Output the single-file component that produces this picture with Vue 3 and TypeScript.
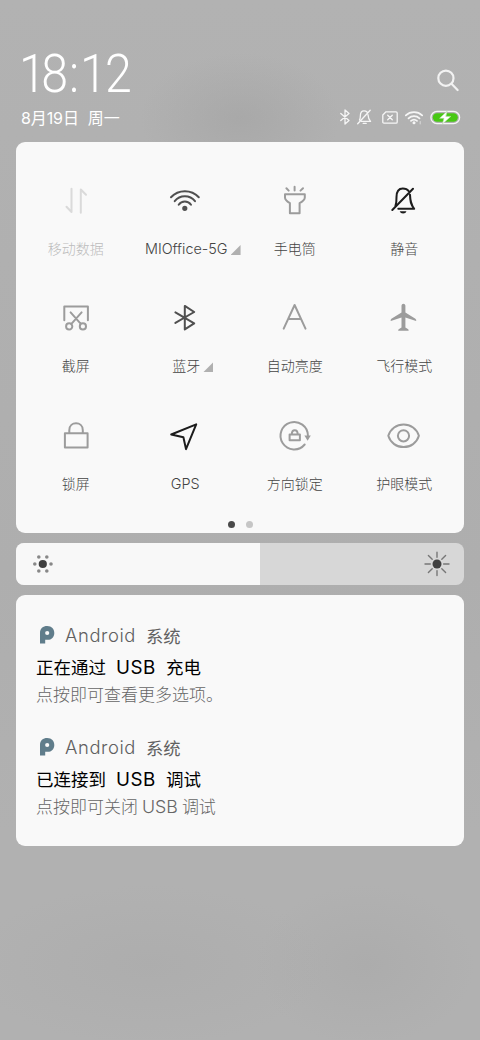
<script setup lang="ts">
interface Shape { d: string; solid?: boolean }
interface Tile { label: string; tone: string; more?: boolean; latin?: boolean; shapes: Shape[] }
interface Part { text: string; latin?: boolean }
interface Notice { title: Part[]; detail: Part[] }

const circle = (x: number, y: number, r: number): string =>
  `M${x - r} ${y}a${r} ${r} 0 1 0 ${2 * r} 0a${r} ${r} 0 1 0 ${-2 * r} 0z`

const tiles: Tile[] = [
  { label: '移动数据', tone: 'off', shapes: [{ d: 'M13.5 5.7V29L8.5 23.7M22.8 29.7V6.5L28 11.7' }] },
  {
    label: 'MIOffice-5G', tone: 'on', more: true, latin: true,
    shapes: [
      { d: 'M4 14.3A18.9 18.9 0 0 1 31.8 14.3M7.7 18.2A12.9 12.9 0 0 1 28 18.2M11.7 21.7A7.5 7.5 0 0 1 24 21.7' },
      { d: circle(17.8, 25.3, 2.6), solid: true },
    ],
  },
  { label: '手电筒', tone: 'idle', shapes: [{ d: 'M8 11.2H27.8V14.4Q27.8 17.2 22.6 20.2V30.2H12.9V20.2Q8 17.2 8 14.4ZM17.6 3.7V7.4M9.4 5.2L11.7 7.6M26 5.2L23.5 7.6' }] },
  {
    label: '静音', tone: 'strong',
    shapes: [
      { d: 'M6.3 27L27 5.8M9.4 23.2Q10.6 20 10.5 14C10.5 8.5 12.7 5.4 16.8 5.4Q20.8 5.4 22.8 8.3M24 11.8C24.2 18.5 24.8 21.4 28.2 25.8H12.3' },
      { d: 'M13.7 28.2H20.5Q19.8 30.4 17.1 30.4T13.7 28.2Z', solid: true },
    ],
  },
  { label: '截屏', tone: 'idle', shapes: [{ d: `M6.3 20.2V6.4H29.9V20.2M12.6 12.4L22.8 23.8M23.6 12.4L13.4 23.8${circle(11.2, 26.4, 3.1)}${circle(24.9, 26.4, 3.1)}` }] },
  { label: '蓝牙', tone: 'on', more: true, shapes: [{ d: 'M8.4 12.4L27.2 23.4L17.8 29.4V5.9L27.2 12L8.4 22.9' }] },
  { label: '自动亮度', tone: 'idle', shapes: [{ d: 'M6.7 28.6L17.6 5L28.5 28.6M11.2 19H24' }] },
  { label: '飞行模式', tone: 'idle', shapes: [{ d: 'M15.5 5.6Q15.7 3.7 17.4 3.7T19.4 5.6V12.4L29.4 18.8Q30.8 20 30.1 21L19.4 17.6V27.6L22.2 29.3Q22.8 30 22.6 30.8H12.2Q12 30 12.7 29.3L15.5 27.6V17.6L4.8 21Q4.1 20 5.4 18.8L15.5 12.4Z', solid: true }] },
  { label: '锁屏', tone: 'idle', shapes: [{ d: 'M6.9 15.2H29.6V29.5H6.9ZM11.3 15V12.3C11.3 3 24.8 3 24.8 12.3V15' }] },
  { label: 'GPS', tone: 'strong', latin: true, shapes: [{ d: 'M4.2 16.5L29.2 6.4L19 31.1L16.4 19.2Z' }] },
  {
    label: '方向锁定', tone: 'idle',
    shapes: [
      { d: 'M27.7 26.5A13.7 13.7 0 1 1 30.9 17.6M12.6 16.6H22.9V22.2H12.6ZM14.8 16.4C14.8 10.8 20.7 10.8 20.7 16.4' },
      { d: 'M27.4 17.6H33.8L30.6 22.8Z', solid: true },
    ],
  },
  { label: '护眼模式', tone: 'idle', shapes: [{ d: `M2.3 17.8C4.5 10.8 10.6 6.4 17.6 6.4S30.8 10.8 32.9 17.8C30.8 24.8 24.6 29.1 17.6 29.1S4.5 24.8 2.3 17.8Z${circle(17.5, 17.8, 5.6)}` }] },
]

const notices: Notice[] = [
  {
    title: [{ text: '正在通过' }, { text: 'USB', latin: true }, { text: '充电' }],
    detail: [{ text: '点按即可查看更多选项。' }],
  },
  {
    title: [{ text: '已连接到' }, { text: 'USB', latin: true }, { text: '调试' }],
    detail: [{ text: '点按即可关闭' }, { text: 'USB', latin: true }, { text: '调试' }],
  },
]

const brightness = 54.46
</script>

<template>
  <main class="shade">
    <header class="header">
      <div>
        <div class="clock"><span class="lead">1</span><span class="mid">8:</span><span class="tail">12</span></div>
        <div class="date">8月19日<span class="weekday">周一</span></div>
      </div>
      <div class="tools">
        <svg class="search" width="22" height="23" viewBox="0 0 22 23">
          <circle cx="8.9" cy="9.2" r="7.6" /><path d="M14.5 14.8L20.6 21" />
        </svg>
        <div class="status">
          <svg width="10" height="16" viewBox="0 0 10 16"><path d="M.8 4.4L9 11.4L5 15V1L9 4.6L.8 11.6" /></svg>
          <svg class="gap-s" width="15" height="16" viewBox="0 0 15 16">
            <path d="M.7 14.7L13.2 1.2M2.5 11Q3.4 9 3.4 6.4C3.4 3.4 4.8 1.8 7 1.8Q9 1.8 10 3M11 5.7Q11.2 9.6 13.5 12.4H4.4M6.2 14.4H9.2" />
          </svg>
          <svg class="gap-l" width="16" height="13" viewBox="0 0 16 13">
            <path d="M4 .8H14Q15.2.8 15.2 2V11Q15.2 12.2 14 12.2H2Q.8 12.2.8 11V4ZM5.7 4.2L10.3 8.8M10.3 4.2L5.7 8.8" />
          </svg>
          <svg class="gap-s" width="18" height="15" viewBox="0 0 18 15">
            <path class="wave" d="M.8 5.4A12 12 0 0 1 17.2 5.4M3.5 8.3A8 8 0 0 1 14.5 8.3M6 10.9A4.6 4.6 0 0 1 12 10.9" />
            <circle class="spot" cx="9" cy="12.7" r="1.5" /><path class="tick" d="M15.2 11.5V14" />
          </svg>
          <svg class="gap-s" width="31" height="15" viewBox="0 0 31 15">
            <rect x=".9" y="1.4" width="28.7" height="12.2" rx="6.1" />
            <rect class="charge" x="2.8" y="3.3" width="25" height="8.4" rx="4.2" />
            <path class="bolt" d="M17 1.2L9.6 8.3H14L12.4 14L20.8 6.4H16Z" />
          </svg>
        </div>
      </div>
    </header>

    <section class="panel">
      <div class="tiles">
        <div v-for="tile in tiles" :key="tile.label" class="tile" :class="tile.tone">
          <svg width="36" height="36" viewBox="0 0 36 36">
            <path v-for="(shape, i) in tile.shapes" :key="i" :d="shape.d" :class="{ solid: shape.solid }" />
          </svg>
          <div class="label" :class="{ wide: tile.latin, more: tile.more }">{{ tile.label }}<i v-if="tile.more" class="corner"></i></div>
        </div>
      </div>
      <div class="pages"><i class="page current"></i><i class="page"></i></div>
    </section>

    <section class="slider">
      <div class="level" :style="{ width: brightness + '%' }">
        <svg width="22" height="22" viewBox="0 0 22 22">
          <g class="rays">
            <circle cx="2.8" cy="11" r="1.8" /><circle cx="19" cy="11" r="1.8" />
            <circle cx="6.8" cy="4" r="1.8" /><circle cx="14.8" cy="4" r="1.8" />
            <circle cx="6.8" cy="18" r="1.8" /><circle cx="14.8" cy="18" r="1.8" />
          </g>
          <circle class="core" cx="10.8" cy="11" r="4.1" />
        </svg>
      </div>
      <svg class="sun" width="26" height="26" viewBox="0 0 26 26">
        <path class="beams" d="M13 1.3V6.3M13 19.6V24.6M1 13H6.3M19.6 13H25M4.4 4.4L8.2 8.2M17.8 17.8L21.6 21.6M4.4 21.6L8.2 17.8M17.8 8.2L21.6 4.4" />
        <circle class="core" cx="13" cy="13" r="4.5" />
      </svg>
    </section>

    <section class="notices">
      <article v-for="(notice, n) in notices" :key="n" class="notice">
        <div class="app">
          <svg width="15" height="18" viewBox="0 0 15 18">
            <path d="M0 17.6V6.8C0 2.6 3 0 7.2 0C11.7 0 14.3 3 14.3 6.9C14.3 11 11.5 13.8 7.7 13.8H5.2V17.6ZM7.2 4.9A2.1 2.1 0 1 0 7.2 9.1A2.1 2.1 0 1 0 7.2 4.9Z" fill-rule="evenodd" />
          </svg>
          <span class="android">Android</span><span>系统</span>
        </div>
        <h2 class="title"><span v-for="(part, i) in notice.title" :key="i" :class="{ latin: part.latin }">{{ part.text }}</span></h2>
        <p class="detail"><span v-for="(part, i) in notice.detail" :key="i" :class="{ latin: part.latin }">{{ part.text }}</span></p>
      </article>
    </section>
  </main>
</template>

<style>
html, body { margin: 0; background: #b0b0b0; }
</style>

<style scoped>
.shade {
  box-sizing: border-box;
  width: 480px;
  height: 1040px;
  padding: 0 16px;
  overflow: hidden;
  font-family: Inter, "Noto Sans CJK SC", sans-serif;
  background:
    radial-gradient(ellipse 100px 65px at 240px 118px, rgba(160, 160, 160, .5), rgba(160, 160, 160, 0)),
    radial-gradient(ellipse 180px 80px at 150px 965px, rgba(166, 166, 166, .35), rgba(166, 166, 166, 0)),
    radial-gradient(ellipse 110px 80px at 365px 965px, rgba(166, 166, 166, .45), rgba(166, 166, 166, 0)),
    linear-gradient(#b2b2b2, #b0b0b0 25%, #aeaeae 55%, #b1b1b1 80%, #b1b1b1);
}
svg { display: block; flex: none; fill: none; stroke-linecap: round; stroke-linejoin: round; }

.header { display: flex; justify-content: space-between; height: 142px; box-sizing: border-box; padding: 44px 4px 0 5px; color: #fff; }
.clock { width: 124px; height: 60px; margin-left: -2.5px; line-height: 60px; font-family: Roboto, sans-serif; font-size: 54px; font-weight: 300; white-space: nowrap; transform: scaleX(.895); transform-origin: 0 50%; }
.lead { letter-spacing: -5px; }
.mid { letter-spacing: 1px; }
.tail { letter-spacing: -2px; }
.date { height: 26px; margin-top: 1px; line-height: 26px; font-size: 16px; letter-spacing: -.1px; white-space: nowrap; }
.weekday { margin-left: 9px; }
.tools { display: flex; flex-direction: column; align-items: flex-end; padding-top: 25px; }
.search { stroke: #f2f2f2; stroke-width: 2.2; margin-right: 1px; }
.status { display: flex; align-items: center; height: 20px; margin: 15px -1px 0 0; }
.status svg { stroke: #f6f6f6; stroke-width: 1.3; }
.gap-s { margin-left: 7px; }
.gap-l { margin-left: 10px; }
.status .wave { stroke-width: 1.7; }
.status .spot { fill: #f6f6f6; stroke: none; }
.tick { stroke-width: 1; opacity: .6; }
.charge { fill: #48c814; stroke: none; }
.bolt { fill: #fff; stroke: #b9dfab; stroke-width: .6; }

.panel { height: 391px; border-radius: 9px; background: #f9f9f9; box-sizing: border-box; padding: 41px 5px 0; }
.tiles { display: grid; grid-template-columns: repeat(4, 1fr); grid-auto-rows: 117.3px; }
.tile { display: flex; flex-direction: column; align-items: center; }
.tile svg { stroke: currentColor; stroke-width: 2; }
.tile .solid { fill: currentColor; stroke: none; }
.label { position: relative; height: 20px; margin-top: 20px; line-height: 20px; font-size: 14px; font-weight: 300; color: #444; white-space: nowrap; }
.wide { font-size: 14.4px; }
.more { margin-left: 2px; }
.off { color: #dadada; }
.off .label { color: #bcbcbc; }
.idle { color: #9c9c9c; }
.on { color: #505050; }
.strong { color: #1c1c1c; }
.corner { position: absolute; right: -13px; bottom: 4px; width: 10px; height: 10px; background: #b0b0b0; clip-path: polygon(100% 0, 100% 100%, 0 100%); }
.pages { display: flex; justify-content: center; gap: 11px; margin-top: -14.4px; }
.page { width: 7px; height: 7px; border-radius: 50%; background: #c6c6c6; }
.current { background: #4a4a4a; }

.slider { display: flex; justify-content: space-between; align-items: center; height: 42px; margin-top: 10px; border-radius: 8px; overflow: hidden; background: #d7d7d7; }
.level { display: flex; align-items: center; height: 42px; box-sizing: border-box; padding-left: 16px; background: #f8f8f8; }
.sun { margin-right: 14px; }
.rays { fill: #888; }
.core { fill: #404040; }
.beams { stroke: #777; stroke-width: 1.4; }

.notices { box-sizing: border-box; height: 251px; margin-top: 10px; padding: 28px 20px 0; border-radius: 9px; background: #f9f9f9; }
.notice { height: 112.4px; }
.app { display: flex; align-items: center; height: 24px; font-size: 17.3px; color: #606060; }
.app svg { fill: #607d8b; margin: 0 10px 0 4px; }
.android { width: 81px; font-size: 18.4px; font-weight: 350; letter-spacing: .6px; }
.title { display: flex; gap: 10px; height: 26px; margin: 7.5px 0 0; line-height: 26px; font-size: 17.5px; font-weight: 400; color: #000; }
.title .latin { letter-spacing: .5px; width: 40px; font-size: 18.8px; }
.detail { display: flex; gap: 4px; height: 26px; margin: 1px 0 0; line-height: 26px; font-size: 17px; font-weight: 300; color: #666; }
.detail .latin { font-size: 17.8px; }
</style>
